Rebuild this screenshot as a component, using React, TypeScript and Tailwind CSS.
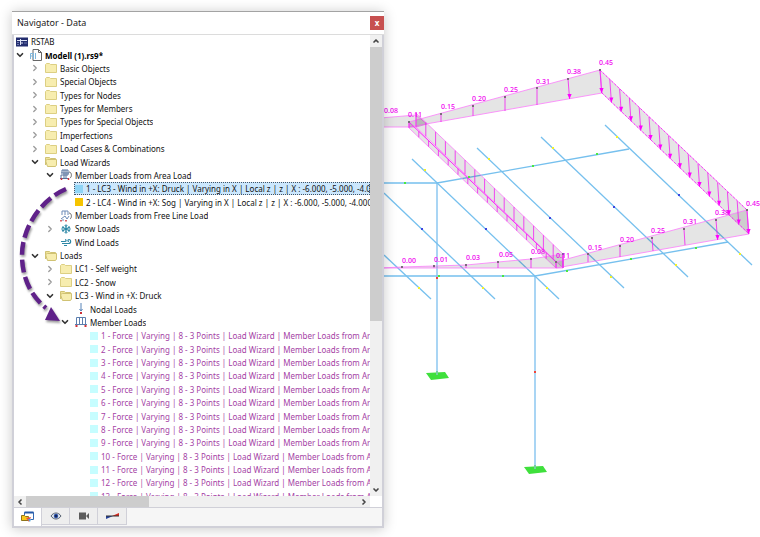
import React, { useState } from "react";
import { ChevronDown, ChevronLeft, ChevronRight, ChevronUp } from "lucide-react";

type IconName =
  | "rstab"
  | "file"
  | "folder"
  | "folderOpen"
  | "area"
  | "freeLine"
  | "snow"
  | "wind"
  | "nodal"
  | "member"
  | "blue"
  | "yellow"
  | "cyan";

type Row = {
  level: number;
  icon: IconName;
  label: string;
  open?: boolean;
};

const forceRows: Row[] = Array.from({ length: 13 }, (_, i) => ({
  level: 5,
  icon: "cyan",
  label: `${i + 1} - Force | Varying | 8 - 3 Points | Load Wizard | Member Loads from Area`,
}));

const rows: Row[] = [
  { level: 0, icon: "rstab", label: "RSTAB" },
  { level: 1, icon: "file", label: "Modell (1).rs9*", open: true },
  { level: 2, icon: "folder", label: "Basic Objects", open: false },
  { level: 2, icon: "folder", label: "Special Objects", open: false },
  { level: 2, icon: "folder", label: "Types for Nodes", open: false },
  { level: 2, icon: "folder", label: "Types for Members", open: false },
  { level: 2, icon: "folder", label: "Types for Special Objects", open: false },
  { level: 2, icon: "folder", label: "Imperfections", open: false },
  { level: 2, icon: "folder", label: "Load Cases & Combinations", open: false },
  { level: 2, icon: "folderOpen", label: "Load Wizards", open: true },
  { level: 3, icon: "area", label: "Member Loads from Area Load", open: true },
  { level: 4, icon: "blue", label: "1 - LC3 - Wind in +X: Druck | Varying in X | Local z | z | X : -6.000, -5.000, -4.000" },
  { level: 4, icon: "yellow", label: "2 - LC4 - Wind in +X: Sog | Varying in X | Local z | z | X : -6.000, -5.000, -4.000" },
  { level: 3, icon: "freeLine", label: "Member Loads from Free Line Load" },
  { level: 3, icon: "snow", label: "Snow Loads", open: false },
  { level: 3, icon: "wind", label: "Wind Loads" },
  { level: 2, icon: "folderOpen", label: "Loads", open: true },
  { level: 3, icon: "folder", label: "LC1 - Self weight", open: false },
  { level: 3, icon: "folder", label: "LC2 - Snow", open: false },
  { level: 3, icon: "folderOpen", label: "LC3 - Wind in +X: Druck", open: true },
  { level: 4, icon: "nodal", label: "Nodal Loads" },
  { level: 4, icon: "member", label: "Member Loads", open: true },
  ...forceRows,
];

const indents = ["pl-px", "pl-px", "pl-4", "pl-[31px]", "pl-[46px]", "pl-[61px]"];

function RowIcon({ name }: { name: IconName }) {
  if (name === "blue") return <span className="size-2 shrink-0 bg-[#8fd4f5]" />;
  if (name === "yellow") return <span className="size-2 shrink-0 bg-[#f6c400]" />;
  if (name === "cyan") return <span className="size-2 shrink-0 bg-[#c6fdff]" />;

  return (
    <svg viewBox="0 0 12 12" className="size-3 shrink-0" fill="none" aria-hidden="true">
      {name === "rstab" && (
        <>
          <rect y="1.5" width="12" height="9" fill="#232d6e" />
          <path d="M1 4.500h10M4.500 3v6M4.500 7H7" stroke="#dfe4f5" />
          <path d="M1 6.500h2M1 8.500h2M8 7h3" stroke="#6d78ae" />
        </>
      )}
      {name === "file" && (
        <>
          <path d="M3 .5h5.500l3 3v8H3z" fill="#fff" stroke="#666" />
          <path d="M8.500.5v3h3" stroke="#666" />
          <path d="M.5 10V4.500h3V10M.5 7h3M5.500 4v6" stroke="#7fb7dc" />
        </>
      )}
      {name === "folder" && (
        <path d="M.5 2.500l1-1h3l1 1h6v8H.5z" fill="#f7edaf" stroke="#dccf83" />
      )}
      {name === "folderOpen" && (
        <>
          <path d="M.5 9V1.500h4l1 1h5V4" fill="#f0e39a" stroke="#d0c273" />
          <path d="M.5 4.500l2-1h9V9l-1 1.500h-8z" fill="#f7edaf" stroke="#d0c273" />
        </>
      )}
      {name === "area" && (
        <>
          <path d="M2 4V1h6v5M4 1v8M6 1v8M1 4h8M1 9V6h7M0 9.500h9" stroke="#56729b" />
          <path d="M9 3c3 0 3 5 1 6" stroke="#666" />
          <path d="M1.500 9v2M8.500 9v2" stroke="#d0333b" strokeWidth="1.500" />
        </>
      )}
      {name === "freeLine" && (
        <>
          <path d="M2 5V1h6v4M5 1v4M1 9l4-3 2 3 2-3M3 9v2" stroke="#6c8bb8" />
          <path d="M9 3c3 0 3 5 1 6" stroke="#666" />
          <path d="M1 10v1.500M6 10v1.500" stroke="#d0333b" strokeWidth="1.500" />
        </>
      )}
      {name === "snow" && (
        <>
          <path d="M6 1.500v9M2 4l8 4M10 4L2 8" stroke="#2c87a5" strokeWidth="1.300" />
          <path d="M4.500 2L6 3.500 7.500 2M4.500 10L6 8.500 7.500 10M1.500 5.500l2-.5-.5-2M10.500 5.500l-2-.5.5-2M1.500 6.500l2 .5-.5 2M10.500 6.500l-2 .5.5 2" stroke="#2c87a5" strokeWidth=".8" />
        </>
      )}
      {name === "wind" && (
        <path d="M1 5.500h4c1.500 0 1.500-2 0-2M2 7.500h6.500c3 0 2.500-4 .5-4-1.500 0-1.500 2 0 2M4 9.500h3" stroke="#2c87a5" strokeWidth="1.200" />
      )}
      {name === "nodal" && (
        <>
          <path d="M6 0v8M4.500 6L6 8l1.500-2" stroke="#5683b8" />
          <rect x="5" y="9" width="2" height="2" fill="#cc2d35" />
        </>
      )}
      {name === "member" && (
        <>
          <path d="M1.500 8V1.500h9V8M4.500 1.500V8M7.500 1.500V8M0 8.500h12" stroke="#5c7eae" />
          <path d="M1.500 9v2M10.500 9v2" stroke="#d0333b" strokeWidth="2" />
        </>
      )}
    </svg>
  );
}

function TreeRow({ row, selected, onSelect }: { row: Row; selected: boolean; onSelect: () => void }) {
  const square = row.icon === "blue" || row.icon === "yellow";
  let color = "text-[#111]";
  if (row.icon === "cyan") color = "text-[#a53fa5]";

  return (
    <li className={`flex min-w-0 items-center ${indents[row.level]}`}>
      {row.level > 0 && (
        <span className="flex w-[14px] shrink-0 items-center">
          {row.open !== undefined && (
            <button type="button" aria-label={`Toggle ${row.label}`} className="flex size-[10px] items-center justify-center">
              {row.open ? (
                <ChevronDown className="size-[10px] text-[#333]" strokeWidth={4} />
              ) : (
                <ChevronRight className="size-[10px] text-[#999]" strokeWidth={3} />
              )}
            </button>
          )}
        </span>
      )}
      <button
        type="button"
        onClick={onSelect}
        className={`flex h-full min-w-0 items-center gap-[3px] overflow-hidden pl-px text-left whitespace-nowrap ${color} ${
          square ? "flex-1" : ""
        } ${selected ? "bg-[#cbe7fd] outline-1 -outline-offset-1 outline-dotted outline-[#456]" : ""}`}
      >
        <RowIcon name={row.icon} />
        <span className={row.icon === "file" ? "font-bold text-black" : ""}>{row.label}</span>
      </button>
    </li>
  );
}

function Navigator() {
  const [selected, setSelected] = useState(11);

  return (
    <section className="relative z-10 w-[372px] shrink-0 border-t border-[#a3a3a3] bg-white shadow-[0_1px_12px_rgba(0,0,0,0.22)]">
      <header className="flex h-[23px] items-center justify-between border-b border-[#dcdcdc] pl-[5px]">
        <h1 className="text-[9px] text-[#222]">Navigator - Data</h1>
        <button type="button" aria-label="Close" className="flex size-[14px] items-center justify-center bg-[#c75050] text-[8px] font-bold text-white">
          x
        </button>
      </header>

      <div className="border-x-2 border-b-2 border-[#d0d0d8]">
        <div className="flex h-[461px]">
          <div className="min-w-0 flex-1 overflow-hidden">
            <ul className="grid h-[468px] auto-rows-fr text-[8px] leading-[13px]">
              {rows.map((row, i) => (
                <TreeRow key={i} row={row} selected={i === selected} onSelect={() => setSelected(i)} />
              ))}
            </ul>
          </div>
          {/* vertical scrollbar */}
          <div className="flex w-[12px] flex-col bg-[#f0f0f0]">
            <button type="button" aria-label="Scroll up" className="flex h-3 items-center justify-center">
              <ChevronUp className="size-2 text-[#444]" strokeWidth={5} />
            </button>
            <div className="h-[274px] bg-[#cdcdcd]" />
            <button type="button" aria-label="Scroll down" className="mt-auto flex h-3 items-center justify-center">
              <ChevronDown className="size-2 text-[#444]" strokeWidth={5} />
            </button>
          </div>
        </div>

        {/* horizontal scrollbar */}
        <div className="flex h-[11px] pr-3">
          <div className="flex flex-1 bg-[#f0f0f0]">
            <button type="button" aria-label="Scroll left" className="flex w-3 items-center justify-center">
              <ChevronLeft className="size-2 text-[#444]" strokeWidth={5} />
            </button>
            <div className="w-[123px] bg-[#cdcdcd]" />
            <button type="button" aria-label="Scroll right" className="ml-auto flex w-3 items-center justify-center">
              <ChevronRight className="size-2 text-[#444]" strokeWidth={5} />
            </button>
          </div>
        </div>

        <nav className="flex h-[19px] border-t border-[#d0d0d8] bg-[#f6f6f6]">
          <button type="button" aria-label="Data" className="flex w-7 items-center justify-center border-r border-[#d0d0d8] bg-white">
            <svg viewBox="0 0 13 12" className="h-3 w-[13px]" fill="none">
              <path d="M3.500 4.500v-3h9v7h-3" fill="#fff" stroke="#3568b0" />
              <path d="M3.500 1.500h9" stroke="#2458a8" strokeWidth="2" />
              <path d="M.5 4.500h3l1 1h3v4h-7z" fill="#f8c61c" stroke="#8e741b" />
              <path d="M5 7l5-1-2 5z" fill="#e0574a" />
              <path d="M7 8h3l-1 3z" fill="#4aa5d9" />
            </svg>
          </button>
          <button type="button" aria-label="Display" className="mb-px flex w-7 items-center justify-center border-r border-b border-[#d0d0d8] bg-[#eee]">
            <svg viewBox="0 0 12 10" className="h-[10px] w-3" fill="none">
              <path d="M1 5c2.500-4 7.500-4 10 0-2.500 4-7.500 4-10 0z" fill="#dbe3ee" stroke="#56606e" />
              <circle cx="6" cy="5" r="2.200" fill="#2a4fa3" />
              <circle cx="6" cy="5" r="1" fill="#111a3c" />
            </svg>
          </button>
          <button type="button" aria-label="Views" className="mb-px flex w-7 items-center justify-center border-r border-b border-[#d0d0d8] bg-[#eee]">
            <svg viewBox="0 0 12 8" className="h-2 w-3">
              <path d="M1 .5h7v7H1zM8 4l3-3v6z" fill="#5b5b5b" />
            </svg>
          </button>
          <button type="button" aria-label="Results" className="mb-px flex w-[29px] items-center justify-center border-r border-b border-[#d0d0d8] bg-[#eee]">
            <svg viewBox="0 0 13 6" className="h-[6px] w-[13px]">
              <path d="M0 3l7 0-7 3z" fill="#23409a" />
              <path d="M6 3l7-3v3z" fill="#d8291f" />
              <path d="M0 3h13" stroke="#333" />
            </svg>
          </button>
        </nav>
      </div>

      {/* arrow from the wizard entry down to the member loads */}
      <svg viewBox="0 0 72 150" className="pointer-events-none absolute top-[168px] left-0 h-[150px] w-[72px] drop-shadow-[1px_2px_1px_rgba(0,0,0,0.4)]" fill="none">
        <path d="M54 9C28 20 10 49 10 75c0 23 9 41 24 53" stroke="#5f2189" strokeWidth="4.500" strokeDasharray="13 4.600" />
        <path d="M48 141L39 127 33 140z" fill="#5f2189" />
      </svg>
    </section>
  );
}

type Point = [number, number];

const beams: Point[][] = [
  [[384, 183], [437, 183], [629, 149]],
  [[384, 276], [535, 276], [728, 242]],
  [[412, 159], [559, 299]],
  [[477, 148], [624, 288]],
  [[541, 137], [688, 277]],
  [[605, 125], [752, 265]],
  [[384, 193], [495, 299]],
  [[384, 255], [431, 299]],
];

const dots: { color: string; points: Point[] }[] = [
  { color: "#f2f224", points: [[425, 170], [489, 159], [553, 148], [617, 137], [419, 288], [483, 288], [547, 288], [611, 277], [676, 265], [740, 254]] },
  { color: "#4be83f", points: [[405, 183], [469, 177], [533, 166], [597, 154], [439, 276], [503, 276], [567, 271], [631, 259], [696, 248]] },
  { color: "#3b46e0", points: [[422, 229], [486, 229], [550, 218], [614, 207], [679, 195]] },
  { color: "#f04438", points: [[437, 278], [535, 372]] },
];

// each post runs from the top edge of a strip to its base line
const posts: [number, number, number, number][] = [
  [441, 114, 441, 122],
  [473, 106, 473, 116],
  [505, 97, 505, 111],
  [537, 88, 537, 105],
  [498, 262, 498, 268],
  [466, 265, 466, 268],
  [434, 266, 434, 268],
  [531, 259, 531, 268],
  [563, 254, 563, 268],
  [588, 254, 588, 262],
  [620, 246, 620, 257],
  [652, 238, 653, 251],
  [684, 229, 685, 245],
];

const nodes: Point[] = [
  [409, 122], [441, 114], [473, 106], [505, 97], [537, 88], [568, 79], [600, 70],
  [402, 267], [434, 266], [466, 265], [498, 262], [531, 259], [556, 262], [563, 254],
  [588, 254], [620, 246], [652, 238], [684, 229], [716, 220], [747, 210],
];

const labels: [number, number, string][] = [
  [384, 113, "0.08"],
  [408, 117, "0.11"],
  [441, 109, "0.15"],
  [472, 101, "0.20"],
  [504, 92, "0.25"],
  [536, 84, "0.31"],
  [567, 74, "0.38"],
  [599, 65, "0.45"],
  [402, 263, "0.00"],
  [434, 262, "0.01"],
  [466, 260, "0.03"],
  [499, 257, "0.05"],
  [531, 254, "0.08"],
  [556, 258, "0.11"],
  [588, 250, "0.15"],
  [620, 242, "0.20"],
  [651, 233, "0.25"],
  [683, 224, "0.31"],
  [715, 215, "0.38"],
  [746, 206, "0.45"],
];

const steps = Array.from({ length: 16 }, (_, i) => i / 15);

function LoadArrow({ x, y1, y2 }: { x: number; y1: number; y2: number }) {
  return (
    <g>
      <path d={`M${x} ${y1}L${x + 1.6} ${y2}`} stroke="#f21df2" strokeWidth="0.8" />
      <path d={`M${x - 0.6} ${y2 - 5}h4.200l-2 5z`} fill="#ff00ff" />
    </g>
  );
}

function ModelView() {
  return (
    <svg viewBox="384 0 376 537" preserveAspectRatio="xMinYMin meet" className="min-w-0 flex-1" fill="none" role="img" aria-label="Structure with member loads">
      <g stroke="#a9d5f4" strokeWidth="2">
        <path d="M437 183V375" />
        <path d="M535 276V469" />
      </g>
      <g stroke="#76c0ee" strokeWidth="1.300">
        {beams.map((beam, i) => (
          <polyline key={i} points={beam.join(" ")} />
        ))}
      </g>

      {/* supports */}
      <path d="M426 373l19-1 4 6-18 2z" fill="#3fe03c" />
      <path d="M524 467l19-1 4 6-18 2z" fill="#3fe03c" />
      <path d="M437 371v4M535 465v4" stroke="#76cfa0" strokeWidth="2" />

      {/* load strips */}
      <g fill="#000" fillOpacity="0.1" stroke="#fb7cfb" strokeWidth="0.8">
        <path d="M380 118L416 115 427 124 416 127H380z" />
        <path d="M409 122L600 70 602 93 409 127z" />
        <path d="M600 70L747 210 749 234 602 93z" />
        <path d="M416 113L563 254V268L416 127z" />
        <path d="M409 122L556 262V268L409 128z" />
        <path d="M380 268L402 267 434 266 466 265 498 262 531 259 563 254V268z" />
        <path d="M556 262L747 210 749 234 556 268z" />
      </g>
      <g stroke="#f21df2" strokeWidth="0.8">
        <path d="M409 122L556 262" />
        {posts.map((p, i) => (
          <path key={i} d={`M${p[0]} ${p[1]}L${p[2]} ${p[3]}`} />
        ))}
        {steps.map((t) => (
          <path key={t} d={`M${416 + 147 * t} ${113 + 141 * t}v14`} />
        ))}
        {steps.map((t) => (
          <path key={t} d={`M${409 + 147 * t} ${122 + 140 * t}v6`} />
        ))}
      </g>
      <path d="M600 70L747 210M602 93L749 234" stroke="#f21df2" strokeWidth="0.8" strokeDasharray="2 2" />
      {steps.map((t) => (
        <LoadArrow key={t} x={600 + 147 * t} y1={70 + 140.500 * t} y2={93 + 141 * t} />
      ))}
      <LoadArrow x={568} y1={79} y2={99} />
      <LoadArrow x={716} y1={220} y2={240} />

      {dots.map((group) =>
        group.points.map(([x, y]) => <rect key={`${x}-${y}`} x={x - 1} y={y - 1} width="2" height="2" fill={group.color} />)
      )}
      {nodes.map(([x, y]) => (
        <rect key={`${x}-${y}`} x={x - 1} y={y - 1} width="2" height="2" fill="#7b6a7b" />
      ))}

      <g fill="#f000f0" className="text-[7px] font-medium">
        {labels.map(([x, y, text]) => (
          <text key={`${x}-${y}`} x={x} y={y}>
            {text}
          </text>
        ))}
      </g>
    </svg>
  );
}

export default function App() {
  return (
    <main className="flex min-h-screen items-start overflow-hidden bg-white pl-3 font-['Noto_Sans','Open_Sans',sans-serif]">
      <div className="shrink-0 pt-[11px]">
        <Navigator />
      </div>
      <ModelView />
    </main>
  );
}
